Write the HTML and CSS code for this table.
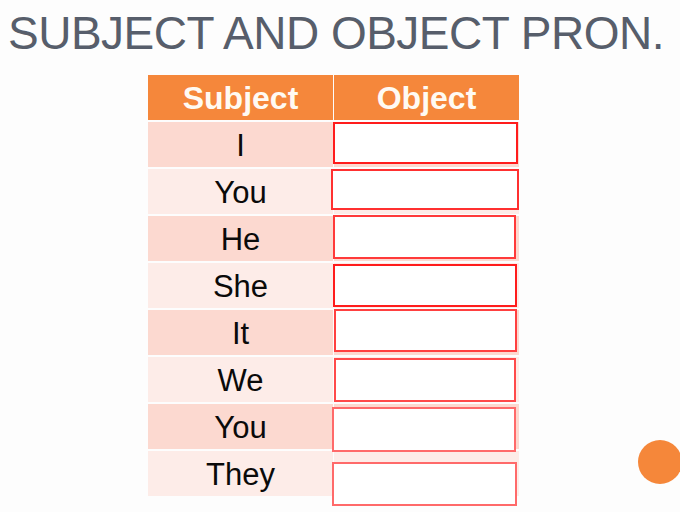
FILE: index.html
```html
<!DOCTYPE html>
<html>
<head>
<meta charset="utf-8">
<link rel="stylesheet" href="styles.css">
</head>
<body>
<div class="slide">
  <h1 class="title">SUBJECT AND OBJECT PRON.</h1>
  <div class="table">
    <div class="th">Subject</div><div class="th">Object</div>
    <div class="td dark">I</div><div class="td dark"></div>
    <div class="td light">You</div><div class="td light"></div>
    <div class="td dark">He</div><div class="td dark"></div>
    <div class="td light">She</div><div class="td light"></div>
    <div class="td dark">It</div><div class="td dark"></div>
    <div class="td light">We</div><div class="td light"></div>
    <div class="td dark">You</div><div class="td dark"></div>
    <div class="td light">They</div><div class="td light"></div>
    <div class="box b1"></div>
    <div class="box b2"></div>
    <div class="box b3"></div>
    <div class="box b4"></div>
    <div class="box b5"></div>
    <div class="box b6"></div>
    <div class="box b7"></div>
    <div class="box b8"></div>
  </div>
  <div class="dot"></div>
</div>
</body>
</html>
```
FILE: styles.css
```css
html, body {
  margin: 0;
  padding: 0;
  background: #fdfdfd;
}
.slide {
  position: relative;
  width: 680px;
  height: 512px;
  overflow: hidden;
  font-family: "Liberation Sans", Arial, sans-serif;
}
.title {
  margin: 0;
  padding: 10px 0 0 8px;
  font-size: 46px;
  line-height: 46px;
  font-weight: normal;
  letter-spacing: -0.5px;
  color: #575e6b;
  white-space: nowrap;
}
.table {
  position: relative;
  margin: 19px 0 0 148px;
  width: 371px;
  display: grid;
  grid-template-columns: 185px 185px;
  grid-template-rows: 45px repeat(8, 45px);
  column-gap: 1px;
  row-gap: 2px;
}
.th {
  background: #f5873b;
  color: #fffaf3;
  font-weight: bold;
  font-size: 32px;
  padding-top: 2px;
  display: flex;
  align-items: center;
  justify-content: center;
}
.td {
  color: #0a0a0a;
  font-size: 31px;
  padding-top: 2px;
  display: flex;
  align-items: center;
  justify-content: center;
}
.dark { background: #fcd9d0; }
.light { background: #fdece8; }
.box {
  position: absolute;
  box-sizing: border-box;
  background: #ffffff;
  border: 2px solid #ff1c1c;
}
.b1 { left: 185px; top: 47px; width: 185px; height: 42px; }
.b2 { left: 183px; top: 94px; width: 188px; height: 41px; border-color: #ff3030; }
.b3 { left: 185px; top: 140px; width: 183px; height: 44px; border-color: #ff3a3a; }
.b4 { left: 185px; top: 189px; width: 184px; height: 43px; }
.b5 { left: 186px; top: 234px; width: 183px; height: 43px; border-color: #ff4040; }
.b6 { left: 186px; top: 283px; width: 182px; height: 44px; border-color: #ff4a4a; }
.b7 { left: 184px; top: 332px; width: 184px; height: 45px; border-color: #ff6a6a; }
.b8 { left: 184px; top: 387px; width: 185px; height: 44px; border-color: #ff6a6a; }
.dot {
  position: absolute;
  left: 638px;
  top: 440px;
  width: 44px;
  height: 44px;
  border-radius: 50%;
  background: #f5873a;
}
```
